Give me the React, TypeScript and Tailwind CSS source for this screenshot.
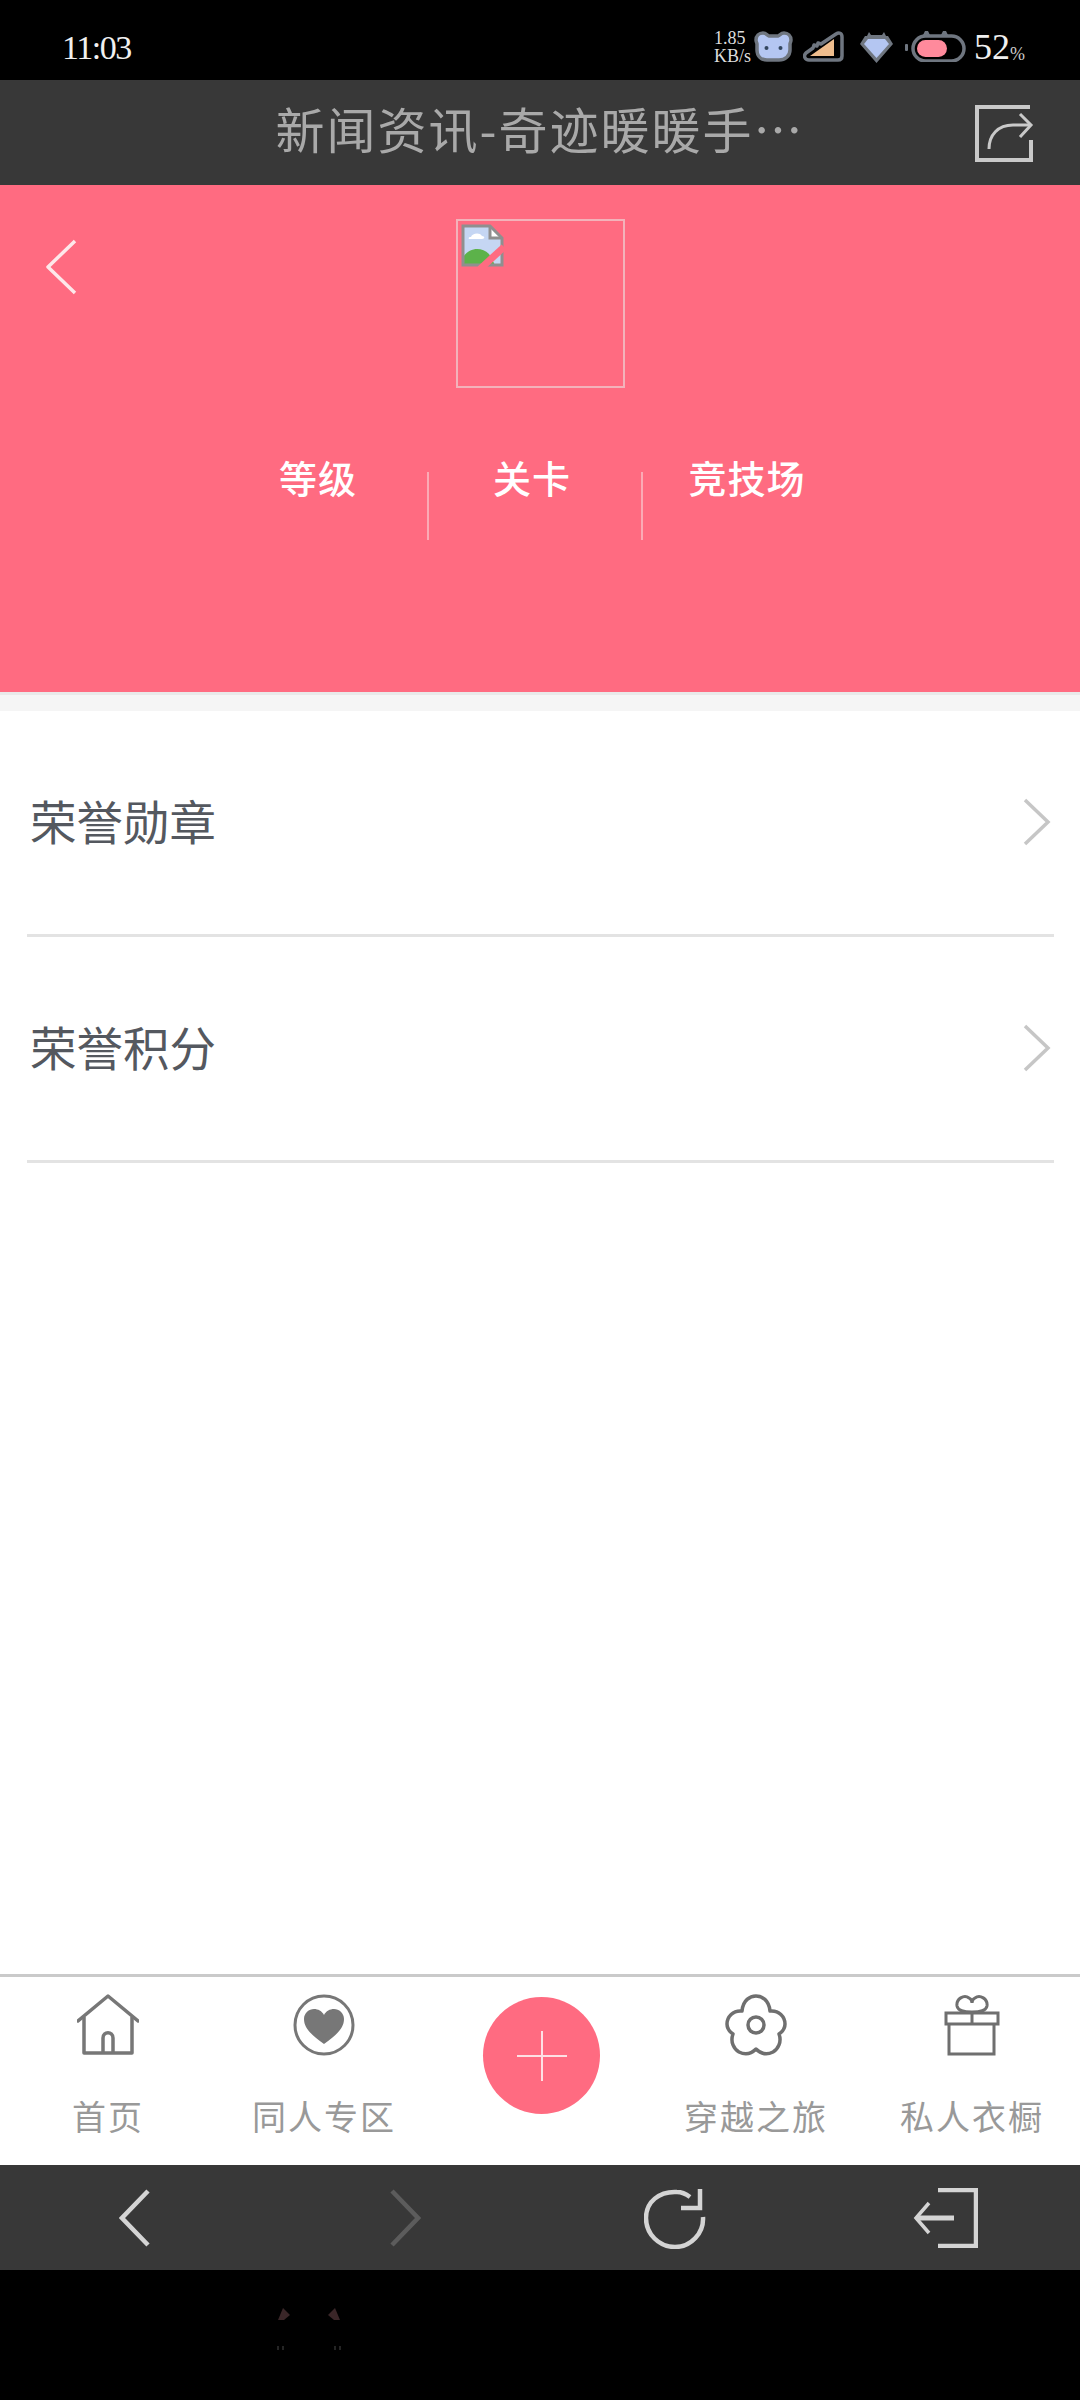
const CJK = "font-['Noto_Sans_CJK_SC',sans-serif]";

function CatIcon() {
  return (
    <svg width="39" height="31" viewBox="0 0 39 31">
      <path d="M9 2c3 0 4 2 6 3h9c2-1 3-3 6-3 4 0 7 3 7 7 0 2-1 3-1 4v6c0 6-5 10-11 10H13C7 29 3 25 3 19v-6c0-1-1-2-1-4 0-4 3-7 7-7z" fill="#b4c6f2" stroke="#6f7680" strokeWidth="3.500" />
      <circle cx="12.5" cy="17" r="2" fill="#33465f" />
      <circle cx="26.5" cy="17" r="2" fill="#33465f" />
    </svg>
  );
}

function SignalIcon() {
  return (
    <svg width="41" height="31" viewBox="0 0 41 31">
      <path d="M3 22l7-5 1-3 3 1 1-3 3 1L33 3c3-2 6-1 6 3v19c0 2-1 4-4 4H6c-4 0-6-4-3-7z" fill="none" stroke="#6f7680" strokeWidth="3.500" strokeLinejoin="round" />
      <path d="M7 25l24-17v17z" fill="#efbd8d" />
    </svg>
  );
}

function WifiIcon() {
  return (
    <svg width="33" height="32" viewBox="0 0 33 32">
      <path d="M7 5l2-4 2 3h11l2-3 2 4h2l5 8-16.500 19L0 13l5-8z" fill="#6f7680" />
      <path d="M8 8h17l4 5-12.500 14L4 13z" fill="#b4c6f2" />
    </svg>
  );
}

function BatteryIcon() {
  return (
    <svg width="61" height="31" viewBox="0 0 61 31">
      <rect x="0" y="13" width="3" height="7" rx="1" fill="#6f7680" />
      <path d="M17 6l3-6 3 0 3 6zM35 6l3-6 3 0 3 6z" fill="#6f7680" />
      <rect x="8" y="5" width="51" height="25" rx="12.500" fill="none" stroke="#6f7680" strokeWidth="3.500" />
      <rect x="12" y="9" width="30" height="17" rx="8.500" fill="#ff8a9c" />
    </svg>
  );
}

function StatusBar() {
  return (
    <div className="h-20 bg-black flex items-center pl-[62px] pr-[55px] font-['Liberation_Serif',serif] text-[#f0f0f0]">
      <span className="text-[34px] tracking-[-1.500px] leading-none pt-[15px]">11:03</span>
      <div className="ml-auto flex items-center pt-[13px]">
        <div className="w-[40px] text-[18px] leading-[18px] text-[#dddddd] whitespace-nowrap">
          <div>1.85</div>
          <div>KB/s</div>
        </div>
        <CatIcon />
        <div className="w-[10px]" />
        <SignalIcon />
        <div className="w-[16px]" />
        <WifiIcon />
        <div className="w-[12px]" />
        <BatteryIcon />
        <span className="ml-[8px] text-[36px] leading-none">52</span>
        <span className="text-[18px] leading-none self-end mb-[2px] text-[#cccccc]">%</span>
      </div>
    </div>
  );
}

function TitleBar() {
  return (
    <div className="relative h-[105px] bg-[#383838] flex items-center justify-center pb-[10px]">
      <span className={`${CJK} text-[49px] tracking-[2px] text-[#a9a9a9] leading-none`}>新闻资讯-奇迹暖暖手…</span>
      <svg className="absolute left-[974px] top-[24px]" width="60" height="58" viewBox="0 0 60 58" fill="none" stroke="#c9c9c9">
        <path d="M56 3H3v53h54V36" strokeWidth="4" />
        <path d="M15 45c0-14 9-24 24-24h17" strokeWidth="3" />
        <path d="M46 10l11 11-11 12" strokeWidth="3" />
      </svg>
    </div>
  );
}

function BrokenImage() {
  return (
    <svg width="43" height="43" viewBox="0 0 43 43">
      <defs>
        <clipPath id="page">
          <path d="M2 2h27l12 12v27H2z" />
        </clipPath>
      </defs>
      <path d="M2 2h27l12 12v27H2z" fill="#c5d6f3" />
      <g clipPath="url(#page)">
        <path d="M10 13c1-4 9-5 11-1 3 0 3 3 0 3H9c-2 0-2-2 1-2z" fill="#ffffff" />
        <path d="M2 41V33c6-9 18-11 26-3l6 11z" fill="#5cb24a" />
      </g>
      <path d="M29 2v12h12" fill="#ffffff" stroke="#8f8f8f" strokeWidth="3" />
      <path d="M2 41V2h27l12 12v27z" fill="none" stroke="#8f8f8f" strokeWidth="3" />
      <path d="M19 45l24-22" stroke="#ff6b81" strokeWidth="7" />
    </svg>
  );
}

function PinkHeader() {
  const tabs = ['等级', '关卡', '竞技场'];
  return (
    <div className="relative h-[507px] bg-[#ff6b81]">
      <svg className="absolute left-[45px] top-[54px]" width="32" height="56" viewBox="0 0 32 56" fill="none" stroke="#fde8ea" strokeWidth="3.500">
        <path d="M30 2L3 28l27 26" strokeLinejoin="round" />
      </svg>
      <div className="ml-[456px] pt-[34px]">
        <div className="w-[169px] h-[169px] border-2 border-[#f3b2ba] pl-[3px] pt-[3px]">
          <BrokenImage />
        </div>
      </div>
      <div className="flex ml-[215px] mt-[84px]">
        {tabs.map((tab, i) => (
          <div key={tab} className={`w-[214px] h-[68px] ${i < 2 ? 'border-r-2 border-[#fbaab5]' : ''}`}>
            <span className={`${CJK} block -mt-[15px] -ml-[6px] text-center text-[38px] leading-[40px] tracking-[1px] font-medium text-white`}>
              {tab}
            </span>
          </div>
        ))}
      </div>
    </div>
  );
}

function ListRow({ label }: { label: string }) {
  return (
    <div className="h-[226px] border-b-[3px] border-[#e3e3e3] flex items-center justify-between pl-[3px] pr-[3px] pb-[2px]">
      <span className={`${CJK} text-[46.500px] leading-none text-[#54585f] -mt-[3px]`}>{label}</span>
      <svg width="28" height="48" viewBox="0 0 28 48" fill="none" stroke="#c6c6c6" strokeWidth="3.500">
        <path d="M2 2l23 22L2 46" />
      </svg>
    </div>
  );
}

function HomeIcon() {
  return (
    <svg width="62" height="62" viewBox="0 0 62 62" fill="none" stroke="#777777" strokeWidth="3.500" strokeLinejoin="round">
      <path d="M1 27L31 2l30 25" strokeLinecap="round" />
      <path d="M7 23v36h48V23" />
      <path d="M26 59V44c0-7 10-7 10 0v15" />
    </svg>
  );
}

function HeartIcon() {
  return (
    <svg width="62" height="62" viewBox="0 0 62 62">
      <circle cx="31" cy="31" r="29" fill="none" stroke="#777777" strokeWidth="3" />
      <path d="M31 50C20 42 11 35 11 25c0-6 5-10 10-10 4 0 8 2 10 6 2-4 6-6 10-6 5 0 10 4 10 10 0 10-9 17-20 25z" fill="#777777" />
    </svg>
  );
}

function FlowerIcon() {
  return (
    <svg width="62" height="62" viewBox="0 0 62 62" fill="none" stroke="#6f6f6f" strokeWidth="3.500" strokeLinejoin="round">
      <path d="M17 17C18 6 25 2 31 2s13 4 14 15c9-1 15 6 15 13 0 5-3 8-6 10 3 8-1 15-6 18-6 3-12 2-17-3-5 5-11 6-17 3-5-3-9-10-6-18-3-2-6-5-6-10 0-7 6-14 15-13z" />
      <circle cx="31" cy="31" r="8" />
    </svg>
  );
}

function GiftIcon() {
  return (
    <svg width="56" height="62" viewBox="0 0 56 62" fill="none" stroke="#6f6f6f" strokeWidth="3">
      <path d="M28 18c-5 0-14 0-15-6-1-7 7-12 12-8 2 1 3 3 3 5 0-2 1-4 3-5 5-4 13 1 12 8-1 6-10 6-15 6z" />
      <path d="M2 19h52v11H2z" />
      <path d="M28 19v11" />
      <path d="M5 30v30h45V30" />
    </svg>
  );
}

function TabBar() {
  const tabs = [
    { label: '首页', icon: <HomeIcon /> },
    { label: '同人专区', icon: <HeartIcon /> },
    null,
    { label: '穿越之旅', icon: <FlowerIcon /> },
    { label: '私人衣橱', icon: <GiftIcon /> },
  ];
  return (
    <div className="h-[191px] border-t-[3px] border-[#cacaca] bg-white grid grid-cols-5">
      {tabs.map((tab, i) =>
        tab ? (
          <div key={tab.label} className="flex flex-col items-center pt-[17px]">
            {tab.icon}
            <span className={`${CJK} mt-[38px] text-[34px] leading-[44px] tracking-[2px] text-[#999999] whitespace-nowrap`}>
              {tab.label}
            </span>
          </div>
        ) : (
          <div key={i} className="flex justify-center pt-[20px] pl-[3px]">
            <div className="w-[117px] h-[117px] rounded-full bg-[#ff6b81] flex items-center justify-center">
              <svg width="52" height="52" viewBox="0 0 52 52" stroke="#fde0e4" strokeWidth="2">
                <path d="M26 1v50M1 26h50" />
              </svg>
            </div>
          </div>
        ),
      )}
    </div>
  );
}

function BottomNav() {
  return (
    <div className="h-[105px] bg-[#383838] grid grid-cols-4">
      <div className="flex items-center justify-center">
        <svg width="32" height="58" viewBox="0 0 32 58" fill="none" stroke="#d4d4d4" strokeWidth="4.500">
          <path d="M29 2L3 29l26 27" />
        </svg>
      </div>
      <div className="flex items-center justify-center">
        <svg width="32" height="58" viewBox="0 0 32 58" fill="none" stroke="#5c5c5c" strokeWidth="4.500">
          <path d="M3 2l26 27L3 56" />
        </svg>
      </div>
      <div className="flex items-center justify-center">
        <svg width="62" height="62" viewBox="0 0 62 62" fill="none" stroke="#d4d4d4" strokeWidth="4.500">
          <path d="M59 30c1 16-12 30-28 30C15 60 2 47 2 31S15 4 33 5c5 0 9 2 13 5" />
          <path d="M56 2v19H37" />
        </svg>
      </div>
      <div className="flex items-center justify-center">
        <svg width="66" height="60" viewBox="0 0 66 60" fill="none" stroke="#d4d4d4">
          <path d="M26 2h38v56H26" strokeWidth="4.500" />
          <path d="M4 30h38" strokeWidth="5" />
          <path d="M17 15L4 30l13 15" strokeWidth="3.500" />
        </svg>
      </div>
    </div>
  );
}

function NavHandle() {
  return (
    <div className="h-[130px] bg-black pl-[277px] pt-[38px]">
      <svg width="66" height="44" viewBox="0 0 66 44">
        <path d="M6 0l7 7-6 5H1z" fill="#3a2628" />
        <path d="M58 0l-7 7 6 5h6z" fill="#3a2628" />
        <path d="M1 38v4M6 38v4M58 38v4M63 38v4" stroke="#242424" strokeWidth="2" />
      </svg>
    </div>
  );
}

export default function App() {
  return (
    <div className="w-[1080px] h-[2400px] flex flex-col bg-white overflow-hidden">
      <StatusBar />
      <TitleBar />
      <PinkHeader />
      <div className="h-[19px] bg-[#f5f5f5] border-t-[3px] border-[#e9e9e9]" />
      {/* list */}
      <div className="flex-1 pl-[27px] pr-[26px]">
        <ListRow label="荣誉勋章" />
        <ListRow label="荣誉积分" />
      </div>
      <TabBar />
      <BottomNav />
      <NavHandle />
    </div>
  );
}
